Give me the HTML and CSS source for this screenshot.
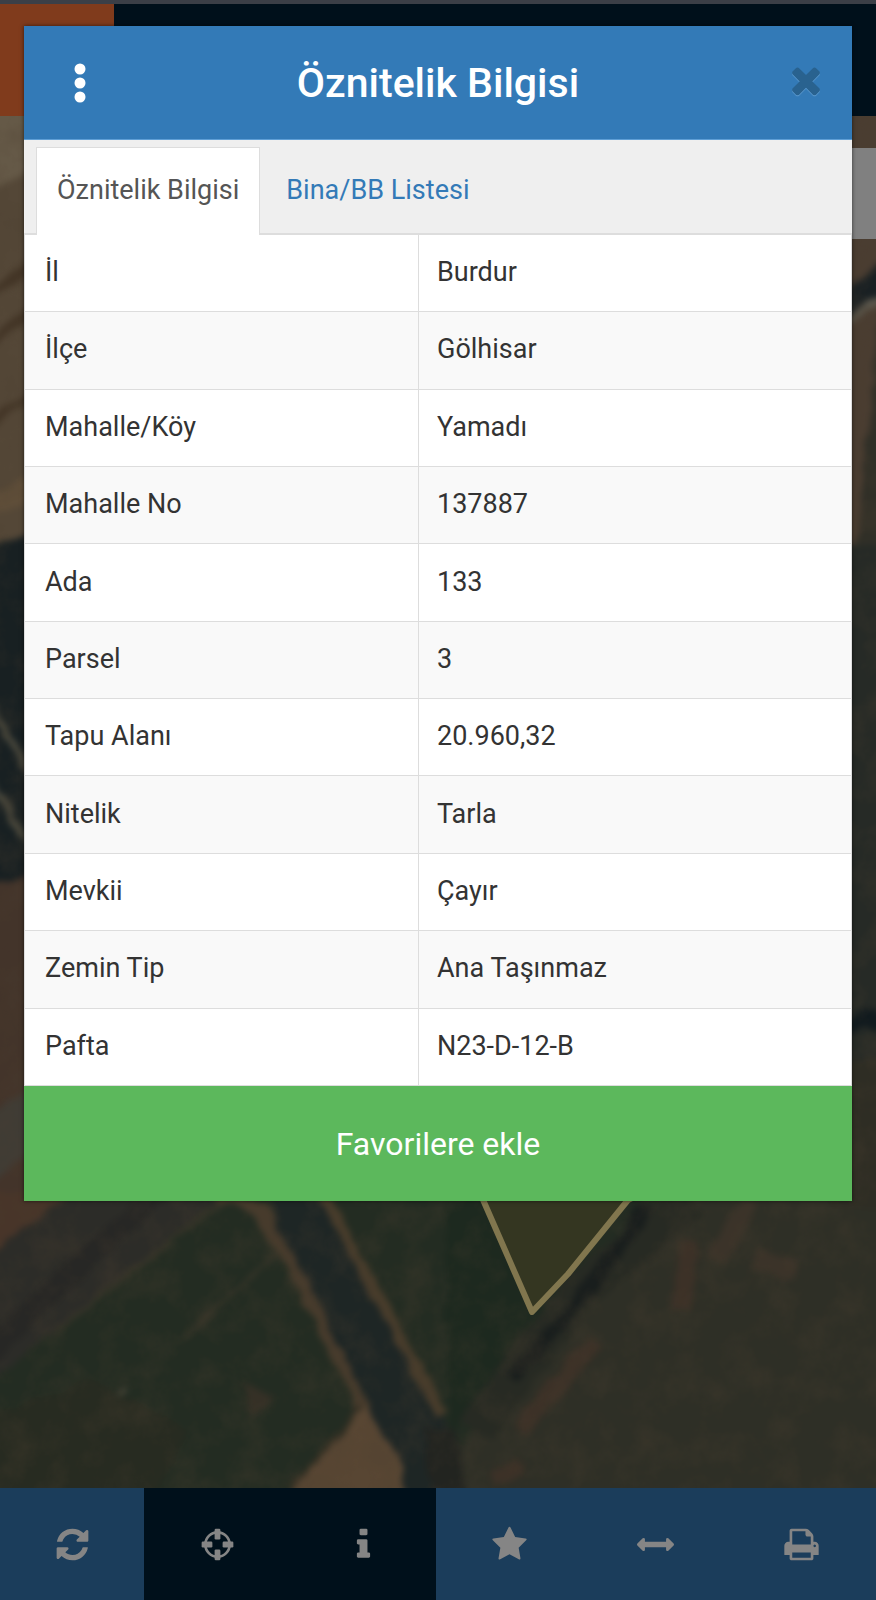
FILE: index.html
```html
<!DOCTYPE html>
<html lang="tr">
<head>
<meta charset="utf-8">
<meta name="viewport" content="width=device-width, initial-scale=1">
<title>Öznitelik Bilgisi</title>
<link rel="stylesheet" href="styles.css">
</head>
<body>
<div class="app">
  <header class="topbar"><div class="brand"></div></header>
  <main class="map">
    <svg class="terrain" viewBox="0 116 876 1372" preserveAspectRatio="none" aria-hidden="true">
      <defs>
        <filter id="soft" x="-5%" y="-5%" width="110%" height="110%" color-interpolation-filters="sRGB">
          <feTurbulence type="fractalNoise" baseFrequency="0.04" numOctaves="4" seed="4" result="n"/>
          <feDisplacementMap in="SourceGraphic" in2="n" scale="12" xChannelSelector="R" yChannelSelector="G" result="d"/>
          <feGaussianBlur in="d" stdDeviation="3"/>
        </filter>
        <filter id="grain" x="0" y="0" width="100%" height="100%" color-interpolation-filters="sRGB">
          <feTurbulence type="fractalNoise" baseFrequency="0.03" numOctaves="5" seed="9"/>
          <feColorMatrix values="0 0 0 0 0.3  0 0 0 0 0.25  0 0 0 0 0.19  1.6 0 0 0 -0.62"/>
        </filter>
      </defs>
      <rect y="116" width="876" height="1372" fill="#232c22"/>
      <g filter="url(#soft)">
        <path d="M-20 1190H900V1500H-20Z" fill="#232c22"/>
        <path d="M-20 100H60V530L-20 548Z" fill="#544737"/>
        <path d="M-20 100H60V160L-20 190Z" fill="#655947"/>
        <path d="M-20 300L60 250M-20 350L60 290M-20 430L60 380" stroke="#433526" stroke-width="9"/>
        <path d="M-20 510L60 475" stroke="#5f4e39" stroke-width="22"/>
        <path d="M-20 550L60 525V890H-20Z" fill="#182022"/>
        <path d="M-10 705L40 790M-10 780L40 862" stroke="#4b493d" stroke-width="7"/>
        <path d="M-20 890L60 865V1150L-20 1290Z" fill="#43342a"/>
        <path d="M-20 1120L50 1075V1140L-20 1190Z" fill="#403c35"/>
        <path d="M-20 1190H70L-20 1280Z" fill="#483529"/>
        <path d="M70 1190H230L-20 1390V1265Z" fill="#2c2c28"/>
        <path d="M160 1190L-20 1360" stroke="#272725" stroke-width="22"/>
        <path d="M230 1195L55 1330M275 1255L185 1337" stroke="#383529" stroke-width="4"/>
        <path d="M128 1387L92 1423" stroke="#484639" stroke-width="4"/>
        <path d="M-20 1420L90 1380L190 1430L150 1500H-20Z" fill="#272b21"/>
        <path d="M240 1380L275 1395L255 1420Z" fill="#353026"/>
        <path d="M265 1190H325L440 1410L480 1500H400L355 1400L290 1270Z" fill="#1e2625"/>
        <path d="M215 1195L260 1210L310 1300L365 1410" fill="none" stroke="#473b2c" stroke-width="13"/>
        <path d="M320 1190L380 1300L442 1415" fill="none" stroke="#483c2b" stroke-width="12"/>
        <path d="M364 1405L398 1455L408 1500H285Z" fill="#584633"/>
        <path d="M362 1407L290 1490" stroke="#332f23" stroke-width="5"/>
        <path d="M445 1190H625L450 1435Z" fill="#1d291f"/>
        <path d="M700 1190H900V1500H465L459 1455L475 1425Z" fill="#2e2f26"/>
        <path d="M690 1200L580 1290L475 1430" fill="none" stroke="#272a23" stroke-width="38"/>
        <path d="M650 1205L568 1315L510 1380" fill="none" stroke="#191e1d" stroke-width="13"/>
        <path d="M595 1340L520 1430M690 1240L680 1310M490 1480L520 1465" fill="none" stroke="#3c3127" stroke-width="19"/>
        <path d="M750 1200L715 1260M755 1260L795 1270" stroke="#3b3329" stroke-width="20"/>
        <path d="M425 1425L455 1430L470 1500H430Z" fill="#222420"/>
        <path d="M820 100H900V600H820Z" fill="#4a3d31"/>
        <path d="M840 292L900 250V278L840 328Z" fill="#192023"/>
        <path d="M835 328L900 286" stroke="#5b574c" stroke-width="7"/>
        <path d="M882 300L855 560H900Z" fill="#302f27"/>
        <path d="M830 545H900V1070H830Z" fill="#262a26"/>
        <path d="M835 1035L867 1018L900 1030" fill="none" stroke="#111a1e" stroke-width="15"/>
        <path d="M830 1060H900V1210H830Z" fill="#2e2d24"/>
      </g>
      <rect y="116" width="876" height="1372" filter="url(#grain)" opacity=".35"/>
      <path d="M470 1170L532 1312L568 1274L640 1190V1170Z" fill="#343621"/>
      <path d="M470 1170L532 1312L568 1274L628 1200L660 1184" fill="none" stroke="#81764e" stroke-width="6" stroke-linejoin="round"/>
    </svg>
    <div class="map-panel"></div>
  </main>
  <nav class="toolbar" aria-label="Harita araçları">
    <button class="tool" type="button" aria-label="Yenile">
      <svg viewBox="-128 -128 1792 1792"><path d="M1511 928q0 5-1 7-64 268-268 434.500t-478 166.500q-146 0-282.500-55t-243.500-157l-129 129q-19 19-45 19t-45-19-19-45v-448q0-26 19-45t45-19h448q26 0 45 19t19 45-19 45l-137 137q71 66 161 102t187 36q134 0 250-65t186-179q11-17 53-117 8-23 30-23h192q13 0 22.500 9.500t9.500 22.500zm25-800v448q0 26-19 45t-45 19h-448q-26 0-45-19t-19-45 19-45l138-138q-148-137-349-137-134 0-250 65t-186 179q-11 17-53 117-8 23-30 23h-199q-13 0-22.500-9.500t-9.500-22.500v-7q65-268 270-434.500t480-166.500q146 0 284 55.500t245 156.500l130-129q19-19 45-19t45 19 19 45z"/></svg>
    </button>
    <button class="tool tool-dark" type="button" aria-label="Konum">
      <svg viewBox="0 0 1792 1792"><circle cx="896" cy="896" r="590" fill="none" stroke="currentColor" stroke-width="130"/><g><rect x="756" y="128" width="280" height="520" rx="60"/><rect x="756" y="1144" width="280" height="520" rx="60"/><rect x="128" y="756" width="520" height="280" rx="60"/><rect x="1144" y="756" width="520" height="280" rx="60"/></g></svg>
    </button>
    <button class="tool tool-dark" type="button" aria-label="Bilgi">
      <svg viewBox="0 0 1792 1792"><path d="M1216 1344v128q0 26-19 45t-45 19h-512q-26 0-45-19t-19-45v-128q0-26 19-45t45-19h64v-384h-64q-26 0-45-19t-19-45v-128q0-26 19-45t45-19h384q26 0 45 19t19 45v576h64q26 0 45 19t19 45zm-128-1152v192q0 26-19 45t-45 19h-256q-26 0-45-19t-19-45v-192q0-26 19-45t45-19h256q26 0 45 19t19 45z"/></svg>
    </button>
    <button class="tool" type="button" aria-label="Favoriler">
      <svg viewBox="0 0 1792 1792"><path d="M1728 647q0 22-26 48l-363 354 86 500q1 7 1 20 0 21-10.500 35.500t-30.500 14.500q-19 0-40-12l-449-236-449 236q-22 12-40 12-21 0-31.500-14.500t-10.500-35.500q0-6 2-20l86-500-364-354q-25-27-25-48 0-37 56-46l502-73 225-455q19-41 49-41t49 41l225 455 502 73q56 9 56 46z"/></svg>
    </button>
    <button class="tool" type="button" aria-label="Ölçüm">
      <svg viewBox="0 0 1792 1792"><path d="M1792 896q0 26-19 45l-256 256q-19 19-45 19t-45-19-19-45v-128h-1024v128q0 26-19 45t-45 19-45-19l-256-256q-19-19-19-45t19-45l256-256q19-19 45-19t45 19 19 45v128h1024v-128q0-26 19-45t45-19 45 19l256 256q19 19 19 45z"/></svg>
    </button>
    <button class="tool" type="button" aria-label="Yazdır">
      <svg viewBox="0 0 1792 1792"><path d="M448 1536h896v-256h-896v256zm0-640h896v-384h-160q-40 0-68-28t-28-68v-160h-640v640zm1152 64q0-26-19-45t-45-19-45 19-19 45 19 45 45 19 45-19 19-45zm128 0v416q0 13-9.500 22.500t-22.500 9.500h-224v160q0 40-28 68t-68 28h-960q-40 0-68-28t-28-68v-160h-224q-13 0-22.500-9.500t-9.500-22.500v-416q0-79 56.500-135.500t135.500-56.500h64v-544q0-40 28-68t68-28h672q40 0 88 20t76 48l152 152q28 28 48 76t20 88v256h64q79 0 135.500 56.500t56.500 135.500z"/></svg>
    </button>
  </nav>
</div>

<section class="modal" role="dialog" aria-labelledby="modal-title">
  <header class="modal-header">
    <button class="icon-button" type="button" aria-label="Menü">
      <svg viewBox="0 0 42 42"><circle cx="21" cy="7" r="5.500"/><circle cx="21" cy="21" r="5.500"/><circle cx="21" cy="35" r="5.500"/></svg>
    </button>
    <h1 class="modal-title" id="modal-title">Öznitelik Bilgisi</h1>
    <button class="icon-button close" type="button" aria-label="Kapat">
      <svg viewBox="0 132 1792 1792"><path d="M1490 1322q0 40-28 68l-136 136q-28 28-68 28t-68-28l-294-294-294 294q-28 28-68 28t-68-28l-136-136q-28-28-28-68t28-68l294-294-294-294q-28-28-28-68t28-68l136-136q28-28 68-28t68 28l294 294 294-294q28-28 68-28t68 28l136 136q28 28 28 68t-28 68l-294 294 294 294q28 28 28 68z"/></svg>
    </button>
  </header>
  <div class="tabs" role="tablist">
    <button class="tab tab-active" type="button" role="tab" aria-selected="true">Öznitelik Bilgisi</button>
    <button class="tab" type="button" role="tab" aria-selected="false">Bina/BB Listesi</button>
  </div>
  <table class="attributes">
    <tbody>
      <tr><th scope="row">İl</th><td>Burdur</td></tr>
      <tr><th scope="row">İlçe</th><td>Gölhisar</td></tr>
      <tr><th scope="row">Mahalle/Köy</th><td>Yamadı</td></tr>
      <tr><th scope="row">Mahalle No</th><td>137887</td></tr>
      <tr><th scope="row">Ada</th><td>133</td></tr>
      <tr><th scope="row">Parsel</th><td>3</td></tr>
      <tr><th scope="row">Tapu Alanı</th><td>20.960,32</td></tr>
      <tr><th scope="row">Nitelik</th><td>Tarla</td></tr>
      <tr><th scope="row">Mevkii</th><td>Çayır</td></tr>
      <tr><th scope="row">Zemin Tip</th><td>Ana Taşınmaz</td></tr>
      <tr><th scope="row">Pafta</th><td>N23-D-12-B</td></tr>
    </tbody>
  </table>
  <button class="favorite" type="button">Favorilere ekle</button>
</section>
</body>
</html>
```
FILE: styles.css
```css
* {
  box-sizing: border-box;
}

body {
  margin: 0;
  position: relative;
  font-family: Roboto, "Noto Sans", sans-serif;
  font-size: 27px;
  line-height: 38px;
  color: #333;
  background: #00101b;
}

button {
  margin: 0;
  padding: 0;
  border: 0;
  background: none;
  color: inherit;
  font: inherit;
  cursor: pointer;
}

svg {
  display: block;
  fill: currentColor;
}

.app {
  display: flex;
  flex-direction: column;
  min-height: 100vh;
}

.topbar {
  display: flex;
  height: 116px;
  border-top: 4px solid #3b3f47;
  background: #00101b;
}

.brand {
  width: 114px;
  background: #803b1c;
}

.map {
  position: relative;
  flex: 1;
  display: grid;
  overflow: hidden;
}

.terrain {
  position: absolute;
  inset: 0;
  width: 100%;
  height: 100%;
}

.map-panel {
  position: absolute;
  top: 32px;
  right: 0;
  width: 120px;
  height: 91px;
  background: #808080;
}

.toolbar {
  display: grid;
  grid-template-columns: 144px repeat(5, 1fr);
  height: 112px;
  padding-right: 2px;
  background: #1b3d5b;
  color: #858585;
}

.tool {
  display: flex;
  align-items: center;
  justify-content: center;
}

.tool-dark {
  background: #00101b;
}

.tool svg {
  width: 37px;
  height: 37px;
}

.modal {
  position: absolute;
  top: 26px;
  left: 24px;
  right: 24px;
  background: #fff;
  box-shadow: 0 0 4px rgba(0, 0, 0, 0.6);
}

.modal-header {
  display: grid;
  grid-template-columns: 1fr auto 1fr;
  align-items: center;
  height: 114px;
  border-bottom: 1px solid #5f9fd6;
  background: #337ab7;
  color: #fff;
}

.icon-button {
  justify-self: start;
  margin-left: 35px;
}

.icon-button svg {
  width: 42px;
  height: 42px;
}

.close {
  justify-self: end;
  margin-right: 25px;
  color: #29628f;
  filter: drop-shadow(0 1px 0 #5d9bd0);
}

.modal-title {
  margin: 0;
  font-size: 41px;
  line-height: 56px;
  font-weight: 500;
}

.tabs {
  display: flex;
  padding: 7px 12px 0;
  background: #efefef;
  border-bottom: 2px solid #ddd;
}

.tab {
  margin-bottom: -2px;
  padding: 23px 25px 26px;
  border: 1px solid transparent;
  border-bottom: 0;
  color: #337ab7;
}

.tab-active {
  padding: 23px 20px 26px;
  border-color: #ddd;
  background: #fff;
  color: #555;
}

.attributes {
  width: 100%;
  height: 851px;
  border-collapse: collapse;
  border: 1px solid #ddd;
  border-top: 0;
}

.attributes th,
.attributes td {
  padding: 15px 18px 17px;
  border-bottom: 1px solid #ddd;
  text-align: left;
  font-weight: 400;
}

.attributes th {
  width: 394px;
  padding-left: 20px;
  border-right: 1px solid #ddd;
}

.attributes tr:nth-child(even) {
  background: #f9f9f9;
}

.favorite {
  display: block;
  width: 100%;
  height: 115px;
  background: #5cb85c;
  color: #fff;
  font-size: 32px;
}
```
